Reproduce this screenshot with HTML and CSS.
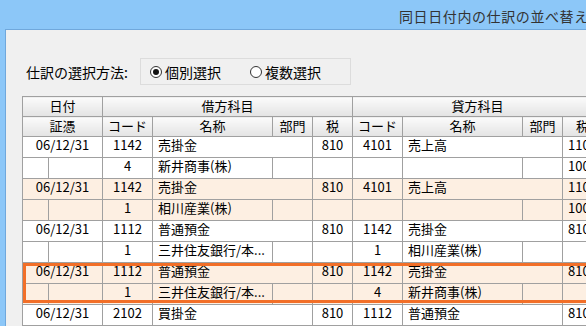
FILE: index.html
```html
<!DOCTYPE html>
<html lang="ja">
<head>
    <meta charset="UTF-8">
    <meta name="viewport" content="width=device-width, initial-scale=1.0">
    <title>同日日付内の仕訳の並べ替え</title>
    <link rel="stylesheet" href="styles.css">
</head>
<body>
    <div class="titlebar">同日日付内の仕訳の並べ替え</div>

    <div class="window">
        <div class="select-row">
            <span class="select-label">仕訳の選択方法:</span>
            <div class="radio-box">
                <label class="radio"><span class="dot checked"></span>個別選択</label>
                <label class="radio"><span class="dot"></span>複数選択</label>
            </div>
        </div>

        <div class="grid-wrap">
            <table class="grid">
                <colgroup>
                    <col style="width:26px"><col style="width:54px">
                    <col style="width:50px"><col style="width:120px"><col style="width:40px"><col style="width:40px">
                    <col style="width:50px"><col style="width:120px"><col style="width:40px"><col style="width:40px">
                </colgroup>
                <thead>
                    <tr>
                        <th colspan="2">日付</th>
                        <th colspan="4">借方科目</th>
                        <th colspan="4">貸方科目</th>
                    </tr>
                    <tr>
                        <th colspan="2">証憑</th>
                        <th>コード</th><th>名称</th><th>部門</th><th>税</th>
                        <th>コード</th><th>名称</th><th>部門</th><th>税</th>
                    </tr>
                </thead>
                <tbody>
                    <tr>
                        <td colspan="2" class="c">06/12/31</td>
                        <td class="c">1142</td><td colspan="2">売掛金</td><td class="c">810</td>
                        <td class="c">4101</td><td colspan="2">売上高</td><td class="t">110</td>
                    </tr>
                    <tr>
                        <td></td><td></td>
                        <td class="c">4</td><td>新井商事(株)</td><td></td><td></td>
                        <td></td><td></td><td></td><td class="t">100</td>
                    </tr>
                    <tr class="alt">
                        <td colspan="2" class="c">06/12/31</td>
                        <td class="c">1142</td><td colspan="2">売掛金</td><td class="c">810</td>
                        <td class="c">4101</td><td colspan="2">売上高</td><td class="t">110</td>
                    </tr>
                    <tr class="alt">
                        <td></td><td></td>
                        <td class="c">1</td><td>相川産業(株)</td><td></td><td></td>
                        <td></td><td></td><td></td><td class="t">100</td>
                    </tr>
                    <tr>
                        <td colspan="2" class="c">06/12/31</td>
                        <td class="c">1112</td><td colspan="2">普通預金</td><td class="c">810</td>
                        <td class="c">1142</td><td colspan="2">売掛金</td><td class="t">810</td>
                    </tr>
                    <tr>
                        <td></td><td></td>
                        <td class="c">1</td><td>三井住友銀行/本...</td><td></td><td></td>
                        <td class="c">1</td><td>相川産業(株)</td><td></td><td></td>
                    </tr>
                    <tr class="alt">
                        <td colspan="2" class="c">06/12/31</td>
                        <td class="c">1112</td><td colspan="2">普通預金</td><td class="c">810</td>
                        <td class="c">1142</td><td colspan="2">売掛金</td><td class="t">810</td>
                    </tr>
                    <tr class="alt">
                        <td></td><td></td>
                        <td class="c">1</td><td>三井住友銀行/本...</td><td></td><td></td>
                        <td class="c">4</td><td>新井商事(株)</td><td></td><td></td>
                    </tr>
                    <tr>
                        <td colspan="2" class="c">06/12/31</td>
                        <td class="c">2102</td><td colspan="2">買掛金</td><td class="c">810</td>
                        <td class="c">1112</td><td colspan="2">普通預金</td><td class="t">810</td>
                    </tr>
                </tbody>
            </table>
            <div class="selection"></div>
        </div>
    </div>
</body>
</html>
```

FILE: styles.css
```css
body {
    margin: 0;
    width: 586px;
    height: 326px;
    overflow: hidden;
    background: #8cc7f8;
    font-family: "Noto Sans CJK JP", "DejaVu Sans", sans-serif;
    font-size: 13px;
    color: #000;
}
.titlebar {
    height: 29px;
    line-height: 32px;
    padding-left: 399px;
    font-size: 14px;
    letter-spacing: 0.6px;
    color: #333;
    white-space: nowrap;
}
.window {
    margin-left: 5px;
    height: 297px;
    width: 700px;
    background: #f0f0f0;
    border-left: 1px solid #70a8dc;
    border-top: 1px solid #70a8dc;
    padding: 28px 0 0 16px;
    box-sizing: border-box;
}
.select-row {
    display: flex;
    align-items: center;
    height: 27px;
    font-size: 14px;
}
.select-label {
    width: 114px;
    padding-left: 4px;
}
.radio-box {
    display: flex;
    align-items: center;
    width: 200px;
    height: 25px;
    border: 1px solid #dcdcdc;
    padding-left: 9px;
}
.radio {
    display: flex;
    align-items: center;
    width: 105px;
}
.dot {
    width: 10px;
    height: 10px;
    border: 1px solid #333;
    border-radius: 50%;
    background: #fff;
    margin-right: 3px;
    position: relative;
}
.dot.checked::after {
    content: "";
    position: absolute;
    left: 2px;
    top: 2px;
    width: 6px;
    height: 6px;
    border-radius: 50%;
    background: #111;
}
.grid-wrap {
    position: relative;
    margin-top: 11px;
}
.grid {
    border-collapse: collapse;
    table-layout: fixed;
    width: 581px;
    background: #fff;
}
.grid th, .grid td {
    border: 1px solid #a0a0a0;
    padding: 0;
    line-height: 16px;
    white-space: nowrap;
    overflow: hidden;
}
.grid th {
    height: 16px;
    padding: 1px 0 2px;
    font-weight: normal;
    background: linear-gradient(#fbfbfb, #e3e3e3);
    text-align: center;
}
.grid td {
    height: 16px;
    padding: 0 0 4px 5px;
}
.grid td.c {
    text-align: center;
    padding-left: 0;
}
.grid td.t {
    padding-left: 5px;
}
.grid tr.alt td {
    background: #fdefe2;
}
.selection {
    position: absolute;
    left: 1px;
    top: 167px;
    width: 620px;
    height: 40px;
    border: 3px solid #f26f28;
    box-sizing: border-box;
}
```
